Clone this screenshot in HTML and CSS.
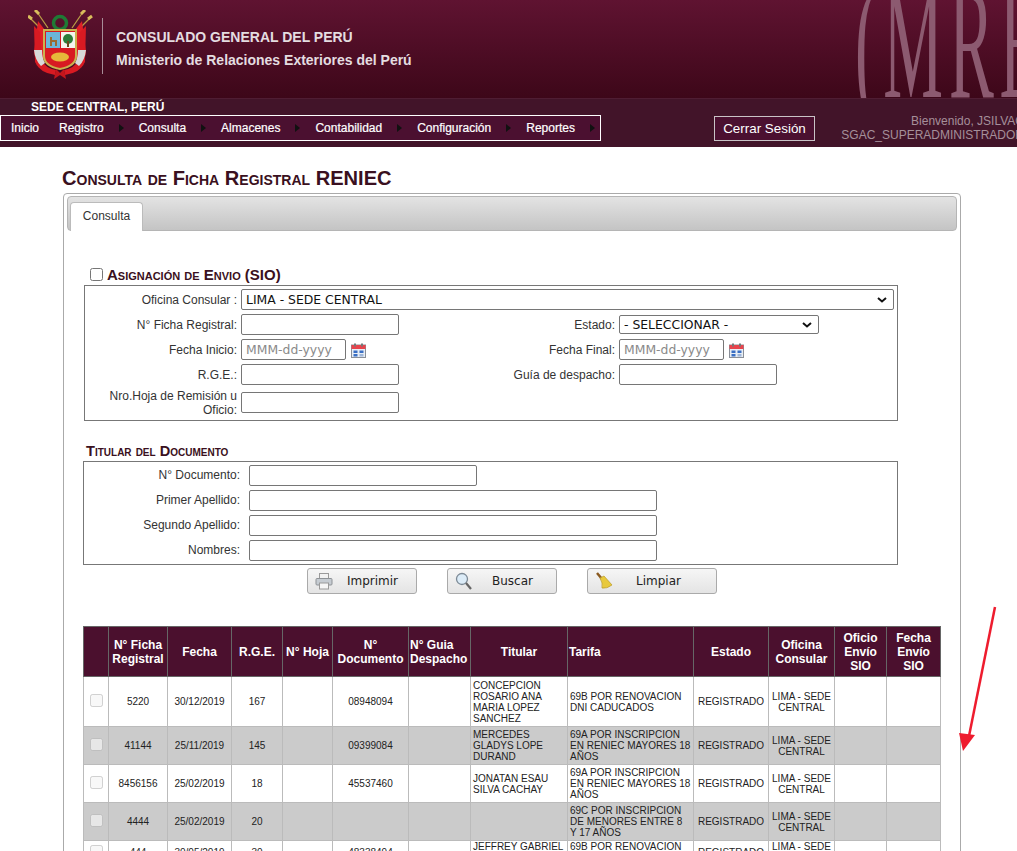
FILE: index.html
```html
<!DOCTYPE html>
<html>
	<head>
		<meta charset="utf-8">
		<title>Consulta de Ficha Registral RENIEC</title>
		<link rel="stylesheet" href="styles.css">
	</head>
	<body>
		<div class="banner">
			<svg class="escudo" width="66" height="72" viewBox="0 0 66 72">
				<path d="M2 8 L18 24 M9 2 L20 18 M55 2 L44 18 M62 8 L46 24" stroke="#b99b45" stroke-width="1.3"/>
				<path d="M0 6 L4 9 M7 0 L11 4 M57 0 L53 4 M64 6 L60 9" stroke="#d9bd5c" stroke-width="3"/>
				<path d="M10 11 L20 24 L18 46 L9 56 L6 42 Z" fill="#e01f26"/>
				<path d="M54 11 L44 24 L46 46 L55 56 L58 42 Z" fill="#e01f26"/>
				<path d="M6 16 L12 22 L14 50 Q17 58 28 60 L27 65 Q12 63 7 52 Z" fill="#d81a22"/>
				<path d="M58 16 L52 22 L50 50 Q47 58 36 60 L37 65 Q52 63 57 52 Z" fill="#d81a22"/>
				<path d="M6 40 Q7 50 13 56 L17 53 Q14 48 14 40 Z" fill="#d9d9d9"/>
				<path d="M58 40 Q57 50 51 56 L47 53 Q50 48 50 40 Z" fill="#d9d9d9"/>
				<circle cx="32" cy="13" r="6.5" fill="none" stroke="#1f7a35" stroke-width="3.5"/>
				<path d="M16 20 H48 V46 Q48 56 32 59 Q16 56 16 46 Z" fill="#d81a22" stroke="#c9b24e" stroke-width="2"/>
				<rect x="18" y="22" width="14" height="16" fill="#6cb5d8"/>
				<rect x="33" y="22" width="14" height="16" fill="#f4f4ee"/>
				<path d="M23 27 V36 M23 31 H28 V36" stroke="#9a6a30" stroke-width="2" fill="none"/>
				<circle cx="40" cy="29" r="5" fill="#2c7d3a"/>
				<rect x="39" y="31" width="2" height="6" fill="#6b4a20"/>
				<ellipse cx="32" cy="47" rx="9" ry="4.500" fill="#e6b83a"/>
				<path d="M28 59 L32 63 L36 59 L38 69 L32 65 L26 69 Z" fill="#c4161c"/>
			</svg>
			<div class="banner-line"></div>
			<div class="banner-text">
				<div class="banner-title">CONSULADO GENERAL DEL PERÚ</div>
				<div class="banner-sub">Ministerio de Relaciones Exteriores del Perú</div>
			</div>
			<div class="marca">(MRE</div>
		</div>
		<div class="subbar">
			<div class="sede">SEDE CENTRAL, PERÚ</div>
			<div class="subbar-row">
				<ul class="menu">
					<li>Inicio</li>
					<li class="sub">Registro</li>
					<li class="sub">Consulta</li>
					<li class="sub">Almacenes</li>
					<li class="sub">Contabilidad</li>
					<li class="sub">Configuración</li>
					<li class="sub">Reportes</li>
				</ul>
				<div class="cerrar">Cerrar Sesión</div>
				<div class="bienvenido">Bienvenido, JSILVAC<br>SGAC_SUPERADMINISTRADOR</div>
			</div>
		</div>

		<div class="contenido">
			<h1>Consulta de Ficha Registral RENIEC</h1>
			<div class="panel">
				<div class="tabs"><div class="tab">Consulta</div></div>

				<label class="asignacion"><input type="checkbox"> Asignación de Envio (SIO)</label>
				<div class="caja caja1">
					<div class="fila">
						<label class="et">Oficina Consular :</label>
						<select class="sel-oficina"><option>LIMA - SEDE CENTRAL</option></select>
					</div>
					<div class="fila">
						<label class="et">N° Ficha Registral:</label>
						<input class="txt">
						<label class="et et2">Estado:</label>
						<select class="sel-estado"><option>- SELECCIONAR -</option></select>
					</div>
					<div class="fila">
						<label class="et">Fecha Inicio:</label>
						<input class="txt fecha" placeholder="MMM-dd-yyyy">
						<svg class="cal" width="15" height="15" viewBox="0 0 15 15"><rect x="0.5" y="2" width="14" height="12.5" fill="#e8eef5" stroke="#8a8f98"/><rect x="0.5" y="2" width="14" height="4" fill="#e8444c"/><rect x="3" y="0.5" width="2" height="3" fill="#777"/><rect x="10" y="0.5" width="2" height="3" fill="#777"/><rect x="2.5" y="7.5" width="4" height="2.5" fill="#3a6fc4"/><rect x="8.5" y="7.5" width="4" height="2.5" fill="#3a6fc4"/><rect x="2.5" y="11" width="4" height="2.5" fill="#3a6fc4"/><rect x="8.5" y="11" width="4" height="2.5" fill="#9fb6d8"/></svg>
						<label class="et et2 tras-fecha">Fecha Final:</label>
						<input class="txt fecha" placeholder="MMM-dd-yyyy">
						<svg class="cal" width="15" height="15" viewBox="0 0 15 15"><rect x="0.5" y="2" width="14" height="12.5" fill="#e8eef5" stroke="#8a8f98"/><rect x="0.5" y="2" width="14" height="4" fill="#e8444c"/><rect x="3" y="0.5" width="2" height="3" fill="#777"/><rect x="10" y="0.5" width="2" height="3" fill="#777"/><rect x="2.5" y="7.5" width="4" height="2.5" fill="#3a6fc4"/><rect x="8.5" y="7.5" width="4" height="2.5" fill="#3a6fc4"/><rect x="2.5" y="11" width="4" height="2.5" fill="#3a6fc4"/><rect x="8.5" y="11" width="4" height="2.5" fill="#9fb6d8"/></svg>
					</div>
					<div class="fila">
						<label class="et">R.G.E.:</label>
						<input class="txt">
						<label class="et et2">Guía de despacho:</label>
						<input class="txt">
					</div>
					<div class="fila fila-alta">
						<label class="et">Nro.Hoja de Remisión u Oficio:</label>
						<input class="txt">
					</div>
				</div>

				<div class="titular">Titular del Documento</div>
				<div class="caja caja2">
					<div class="fila2"><label class="et3">N° Documento:</label><input class="txt txt-doc"></div>
					<div class="fila2"><label class="et3">Primer Apellido:</label><input class="txt txt-largo"></div>
					<div class="fila2"><label class="et3">Segundo Apellido:</label><input class="txt txt-largo"></div>
					<div class="fila2"><label class="et3">Nombres:</label><input class="txt txt-largo"></div>
				</div>

				<div class="botones">
					<button class="btn">
						<svg width="18" height="18" viewBox="0 0 18 18"><rect x="4.5" y="1.5" width="9" height="5" fill="#f2f2f2" stroke="#9a9a9a"/><rect x="1" y="6.5" width="16" height="6.5" rx="1" fill="#c6ccd2" stroke="#8e9296"/><rect x="4.5" y="11" width="9" height="6" fill="#f6f6f6" stroke="#9a9a9a"/></svg>
						<span>Imprimir</span>
					</button>
					<button class="btn">
						<svg width="18" height="19" viewBox="0 0 18 19"><circle cx="7" cy="7" r="5.500" fill="#dcecf8" stroke="#7d8a96" stroke-width="1.3"/><path d="M11 11 L16 17" stroke="#666" stroke-width="2.2"/></svg>
						<span>Buscar</span>
					</button>
					<button class="btn btn-limpiar">
						<svg width="18" height="18" viewBox="0 0 18 18"><path d="M2 1 L7 7" stroke="#8a5a20" stroke-width="2.5"/><path d="M5 6 L9 4 L17 13 Q12 17 7 16 Q8 11 5 6 Z" fill="#e8c93c" stroke="#b99a26" stroke-width="0.7"/></svg>
						<span>Limpiar</span>
					</button>
				</div>

				<table class="grilla">
					<colgroup>
						<col><col><col><col><col><col><col><col><col><col><col><col><col>
					</colgroup>
					<thead>
						<tr>
							<th></th><th>N° Ficha Registral</th><th>Fecha</th><th>R.G.E.</th><th>N° Hoja</th><th>N° Documento</th><th class="izq">N° Guia Despacho</th><th>Titular</th><th class="izq">Tarifa</th><th>Estado</th><th>Oficina Consular</th><th>Oficio Envío SIO</th><th>Fecha Envío SIO</th>
						</tr>
					</thead>
					<tbody>
						<tr class="r1">
							<td><input type="checkbox" disabled></td><td>5220</td><td>30/12/2019</td><td>167</td><td></td><td>08948094</td><td></td>
							<td class="izq">CONCEPCION ROSARIO ANA MARIA LOPEZ SANCHEZ</td><td class="izq">69B POR RENOVACION DNI CADUCADOS</td><td>REGISTRADO</td><td>LIMA - SEDE CENTRAL</td><td></td><td></td>
						</tr>
						<tr class="par r2">
							<td><input type="checkbox" disabled></td><td>41144</td><td>25/11/2019</td><td>145</td><td></td><td>09399084</td><td></td>
							<td class="izq">MERCEDES GLADYS LOPE DURAND</td><td class="izq">69A POR INSCRIPCION EN RENIEC MAYORES 18 AÑOS</td><td>REGISTRADO</td><td>LIMA - SEDE CENTRAL</td><td></td><td></td>
						</tr>
						<tr class="r3">
							<td><input type="checkbox" disabled></td><td>8456156</td><td>25/02/2019</td><td>18</td><td></td><td>45537460</td><td></td>
							<td class="izq">JONATAN ESAU SILVA CACHAY</td><td class="izq">69A POR INSCRIPCION EN RENIEC MAYORES 18 AÑOS</td><td>REGISTRADO</td><td>LIMA - SEDE CENTRAL</td><td></td><td></td>
						</tr>
						<tr class="par r4">
							<td><input type="checkbox" disabled></td><td>4444</td><td>25/02/2019</td><td>20</td><td></td><td></td><td></td>
							<td class="izq"></td><td class="izq">69C POR INSCRIPCION DE MENORES ENTRE 8 Y 17 AÑOS</td><td>REGISTRADO</td><td>LIMA - SEDE CENTRAL</td><td></td><td></td>
						</tr>
						<tr>
							<td><input type="checkbox" disabled></td><td>444</td><td>30/05/2019</td><td>30</td><td></td><td>48338494</td><td></td>
							<td class="izq">JEFFREY GABRIEL RAMOS PRADO</td><td class="izq">69B POR RENOVACION DNI CADUCADOS</td><td>REGISTRADO</td><td>LIMA - SEDE CENTRAL</td><td></td><td></td>
						</tr>
					</tbody>
				</table>
			</div>
		</div>

		<svg class="flecha" width="40" height="150" viewBox="0 0 40 150">
			<path d="M36 1 L10 130" stroke="#ee1c2e" stroke-width="2.5"/>
			<path d="M0 127 L16 129 L4 145 Z" fill="#ee1c2e"/>
		</svg>
	</body>
</html>
```

FILE: styles.css
```css
html, body {
	height: 100%;
}
body {
	margin: 0;
	height: 851px;
	overflow: hidden;
	position: relative;
	background: #fff;
	font-family: "Liberation Sans", Arial, sans-serif;
	font-size: 12px;
	color: #222;
}

/* cabecera */
.banner {
	height: 98px;
	position: relative;
	overflow: hidden;
	display: flex;
	align-items: flex-start;
	background: linear-gradient(#5f1331, #3d0719);
	color: #ddd;
}
.escudo {
	margin: 10px 0 0 28px;
	flex: none;
}
.banner-line {
	width: 1px;
	height: 56px;
	margin: 18px 0 0 8px;
	background: #a88d98;
}
.banner-text {
	margin: 29px 0 0 13px;
	font-weight: bold;
}
.banner-title {
	font-size: 14px;
	line-height: 16px;
	color: #e4dde0;
}
.banner-sub {
	margin-top: 7px;
	font-size: 14px;
	line-height: 16px;
	color: #e4dde0;
}
.marca {
	position: absolute;
	left: 855px;
	top: -42px;
	font-family: "Liberation Serif", serif;
	font-size: 160px;
	line-height: 170px;
	letter-spacing: 14px;
	color: #8c5a70;
	white-space: nowrap;
	transform: scaleX(0.42);
	transform-origin: left top;
}
.subbar {
	height: 49px;
	box-sizing: border-box;
	border-top: 1px solid #4f1d33;
	background: #421429;
	overflow: hidden;
}
.sede {
	padding: 1px 0 0 31px;
	font-size: 12px;
	font-weight: bold;
	line-height: 15px;
	color: #fff;
}
.subbar-row {
	display: flex;
	align-items: flex-start;
}
.menu {
	list-style: none;
	flex: none;
	margin: 0;
	padding: 0 0 0 10px;
	width: 589px;
	height: 24px;
	display: flex;
	align-items: center;
	border: 1px solid #fff;
	background: #4b1030;
	color: #fff;
	font-size: 12px;
	-webkit-text-stroke: 0.2px #fff;
}
.menu li {
	margin-right: 20px;
	position: relative;
}
.menu li.sub {
	margin-right: 15px;
	padding-right: 20px;
}
.menu li.sub::after {
	content: "";
	position: absolute;
	right: 0;
	top: 3px;
	border-left: 5px solid #111;
	border-top: 4px solid transparent;
	border-bottom: 4px solid transparent;
}
.cerrar {
	flex: none;
	margin: 1px 0 0 113px;
	width: 99px;
	height: 23px;
	line-height: 23px;
	text-align: center;
	white-space: nowrap;
	border: 1px solid #c9c3c6;
	background: #4b1030;
	color: #fff;
	font-size: 13.4px;
}
.bienvenido {
	margin: -1px 0 0 26px;
	width: 183px;
	flex: none;
	text-align: right;
	white-space: nowrap;
	font-size: 12px;
	line-height: 14px;
	color: #a58f9a;
}

/* contenido */
.contenido {
	padding: 0 0 0 62px;
	width: 899px;
}
h1 {
	margin: 21px 0 5px;
	font-size: 20.1px;
	line-height: 20px;
	font-weight: bold;
	font-variant: small-caps;
	color: #3a1020;
	white-space: nowrap;
}
.panel {
	margin-left: 1px;
	width: 898px;
	height: 700px;
	padding: 2px 3px 0;
	box-sizing: border-box;
	border: 1px solid #aaa;
	border-radius: 4px;
}
.tabs {
	height: 28px;
	border: 1px solid #b5b5b5;
	border-radius: 4px;
	background: linear-gradient(#e3e3e3, #c4c4c4);
	padding: 5px 0 0 2px;
}
.tab {
	width: 73px;
	height: 29px;
	line-height: 26px;
	text-align: center;
	box-sizing: border-box;
	background: #fff;
	border: 1px solid #bbb;
	border-bottom: 0;
	border-radius: 4px 4px 0 0;
	font-size: 12px;
	color: #333;
}
.asignacion {
	display: flex;
	align-items: center;
	margin: 35px 0 0 23px;
	height: 16px;
	font-variant: small-caps;
	font-weight: bold;
	font-size: 15px;
	color: #3a1020;
}
.asignacion input {
	margin: 0 4px 0 0;
	width: 13px;
	height: 13px;
}
.caja {
	border: 1px solid #777;
	box-sizing: border-box;
}
.caja1 {
	margin: 3px 0 0 17px;
	width: 814px;
	height: 136px;
	padding: 3px 0 0;
}
.fila {
	display: flex;
	align-items: center;
	height: 21px;
	margin-bottom: 4px;
}
.fila-alta {
	height: 26px;
	margin-top: 2px;
	margin-bottom: 0;
}
.fila-alta .et {
	padding-top: 2px;
}
.et {
	width: 152px;
	flex: none;
	padding-right: 4px;
	text-align: right;
	color: #333;
	line-height: 14px;
}
.et2 {
	width: 216px;
}
.tras-fecha {
	width: 249px;
}
.txt {
	width: 158px;
	height: 21px;
	box-sizing: border-box;
	flex: none;
	margin: 0;
	padding: 1px 4px;
	border: 1px solid #767676;
	border-radius: 2px;
	font-size: 13px;
	font-family: "Liberation Sans", Arial, sans-serif;
}
.fecha {
	width: 105px;
	font-family: "DejaVu Sans", sans-serif;
	font-size: 12.4px;
}
.fecha::placeholder {
	color: #8a8a8a;
}
.cal {
	margin: 2px 0 0 5px;
	flex: none;
}
select {
	appearance: none;
	height: 21px;
	margin: 0;
	padding: 0 0 0 4px;
	border: 1px solid #767676;
	border-radius: 2px;
	background: #fff url("data:image/svg+xml,%3Csvg xmlns='http://www.w3.org/2000/svg' width='10' height='6'%3E%3Cpath d='M1 1l4 3.500 4-3.500' fill='none' stroke='%23111' stroke-width='2'/%3E%3C/svg%3E") no-repeat right 6px center;
	font-family: "DejaVu Sans", sans-serif;
	font-size: 12.4px;
	color: #111;
}
.sel-oficina {
	width: 653px;
}
.sel-estado {
	width: 200px;
	height: 19px;
}
.titular {
	margin: 23px 0 3px 19px;
	font-size: 14.6px;
	line-height: 14px;
	font-weight: bold;
	font-variant: small-caps;
	color: #3a1020;
}
.caja2 {
	margin-left: 16px;
	width: 815px;
	height: 104px;
	padding: 3px 0 0;
}
.fila2 {
	display: flex;
	align-items: center;
	height: 21px;
	margin-bottom: 4px;
}
.et3 {
	width: 156px;
	flex: none;
	text-align: right;
	padding: 0 9px 2px 0;
	color: #333;
}
.txt-doc {
	width: 228px;
}
.txt-largo {
	width: 408px;
}
.botones {
	display: flex;
	margin: 3px 0 0 240px;
	gap: 30px;
}
.btn {
	width: 110px;
	height: 26px;
	padding: 0 0 0 7px;
	display: flex;
	align-items: center;
	border: 1px solid #aaa;
	border-radius: 3px;
	background: linear-gradient(#f6f6f6, #e4e4e4);
	font-family: "DejaVu Sans", sans-serif;
	font-size: 12px;
	color: #222;
}
.btn span {
	flex: 1;
	text-align: center;
	padding-right: 4px;
}
.btn-limpiar {
	width: 130px;
}
.btn-limpiar span {
	padding-right: 12px;
}

/* grilla */
.grilla {
	margin: 32px 0 0 16px;
	width: 857px;
	table-layout: fixed;
	border-collapse: collapse;
	border-top: 1px solid #555;
	font-size: 10px;
	line-height: 11px;
	color: #222;
}
.grilla col:nth-child(1) { width: 25px; }
.grilla col:nth-child(2) { width: 59px; }
.grilla col:nth-child(3) { width: 64px; }
.grilla col:nth-child(4) { width: 51px; }
.grilla col:nth-child(5) { width: 50px; }
.grilla col:nth-child(6) { width: 76px; }
.grilla col:nth-child(7) { width: 62px; }
.grilla col:nth-child(8) { width: 97px; }
.grilla col:nth-child(9) { width: 126px; }
.grilla col:nth-child(10) { width: 75px; }
.grilla col:nth-child(11) { width: 66px; }
.grilla col:nth-child(12) { width: 52px; }
.grilla col:nth-child(13) { width: 54px; }
.grilla th {
	height: 49px;
	padding: 0 1px;
	background: #4b102e;
	color: #fff;
	font-size: 12px;
	line-height: 14px;
	font-weight: bold;
	border: 1px solid #666;
	text-align: center;
}
.grilla td {
	padding: 0 2px;
	border: 1px solid #bbb;
	text-align: center;
	background: #fff;
}
.grilla .izq {
	text-align: left;
}
.grilla .par td {
	background: #cbcbcb;
}
.grilla input {
	margin: 0;
	width: 13px;
	height: 13px;
}
.r1 td {
	height: 49px;
}
.r2 td, .r3 td, .r4 td {
	height: 37px;
}

.flecha {
	position: absolute;
	left: 959px;
	top: 606px;
}
```
